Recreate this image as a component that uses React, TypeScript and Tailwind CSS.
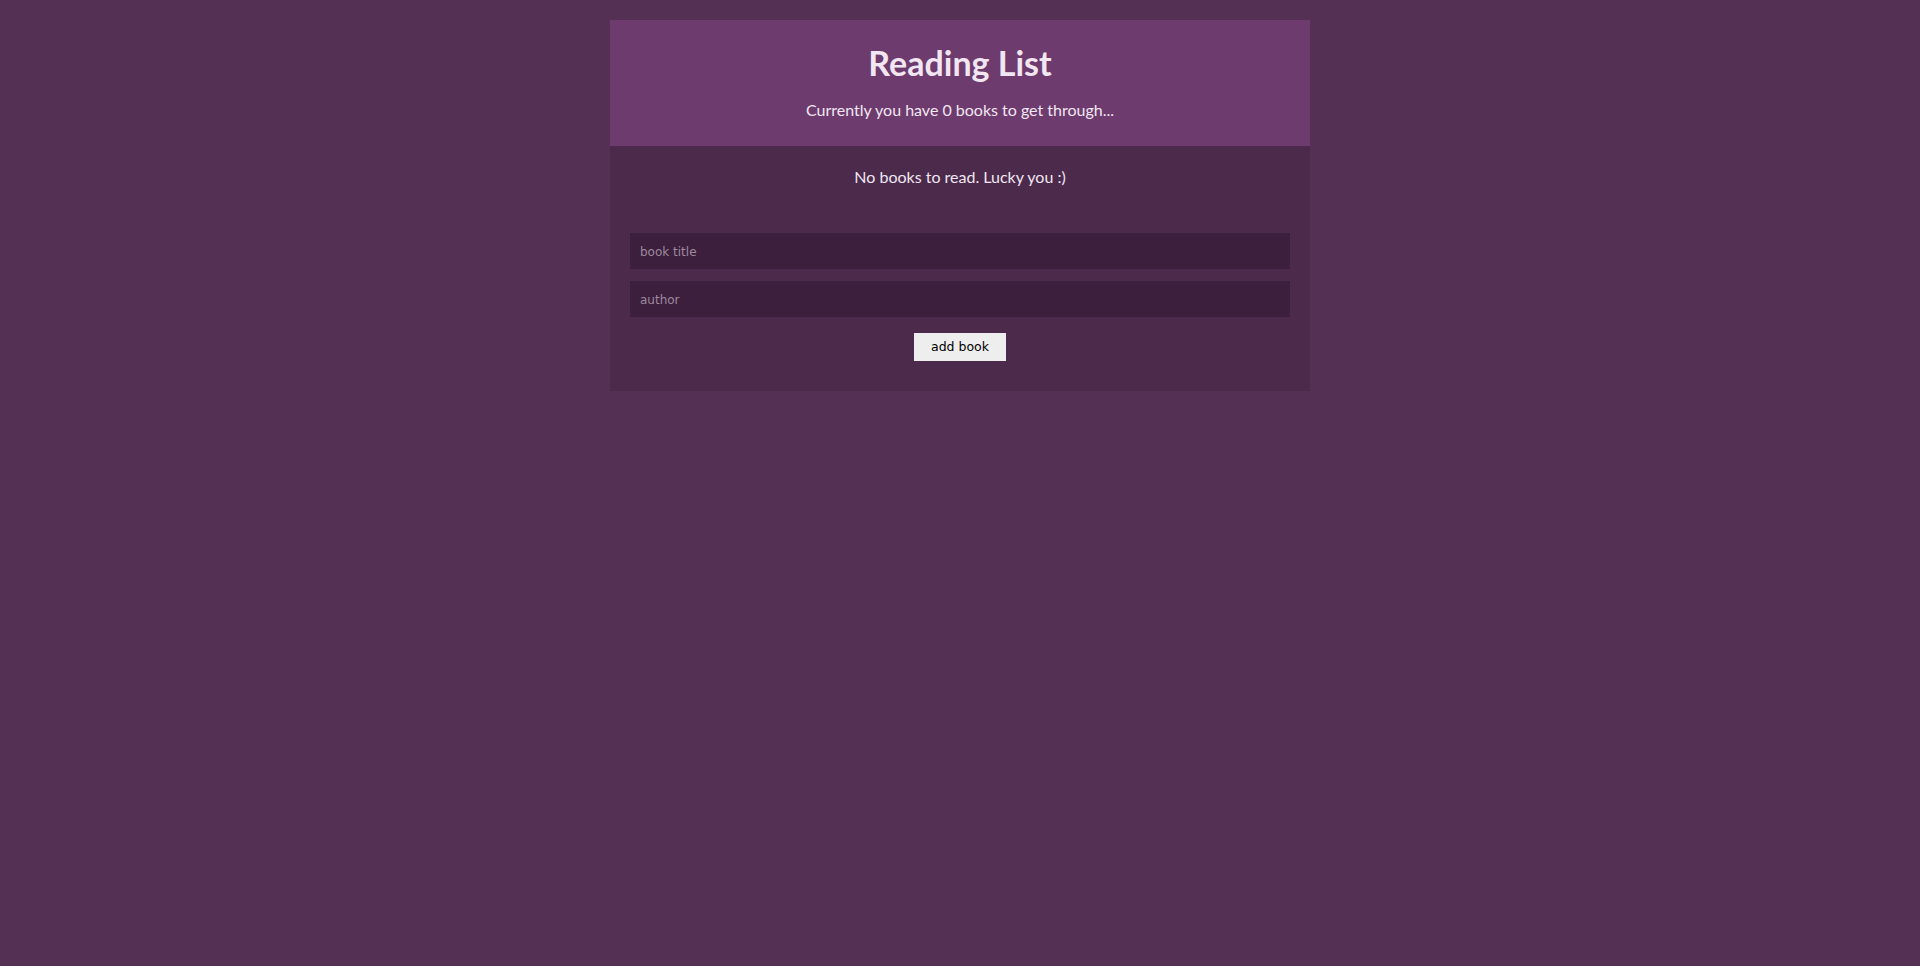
export default function App() {
  return (
    <div className="min-h-screen bg-[#553055] pt-5 font-['Lato','Noto_Sans',sans-serif] text-[#f1e6f1]">
      <div className="mx-auto w-[700px] bg-[#4b2a4b]">
        {/* Header */}
        <div className="flex h-[126px] flex-col items-center bg-[#6d3b6d] pt-[19px]">
          <h1 className="text-[34px] font-bold leading-[48px]">Reading List</h1>
          <p className="mt-[12px] text-[16px] leading-[22px]">Currently you have 0 books to get through...</p>
        </div>

        {/* Book list */}
        <div className="px-5 pt-5 text-center text-[16px] leading-[22px]">No books to read. Lucky you :)</div>

        {/* Form */}
        <form className="flex flex-col items-center px-5 pt-[45px] pb-[30px]" onSubmit={(e) => e.preventDefault()}>
          <input
            type="text"
            placeholder="book title"
            className="h-9 w-full bg-[#3c1f3d] px-[10px] pt-[1px] font-['DejaVu_Sans',sans-serif] text-[12px] text-[#f1e6f1] outline-none placeholder:text-[#9e899e]"
          />
          <input
            type="text"
            placeholder="author"
            className="mt-3 h-9 w-full bg-[#3c1f3d] px-[10px] pt-[1px] font-['DejaVu_Sans',sans-serif] text-[12px] text-[#f1e6f1] outline-none placeholder:text-[#9e899e]"
          />
          <button
            type="submit"
            className="mt-4 h-7 w-[92px] bg-[#eeeeee] pt-[1px] font-['DejaVu_Sans',sans-serif] text-[12.5px] text-black"
          >
            add book
          </button>
        </form>
      </div>
    </div>
  );
}
